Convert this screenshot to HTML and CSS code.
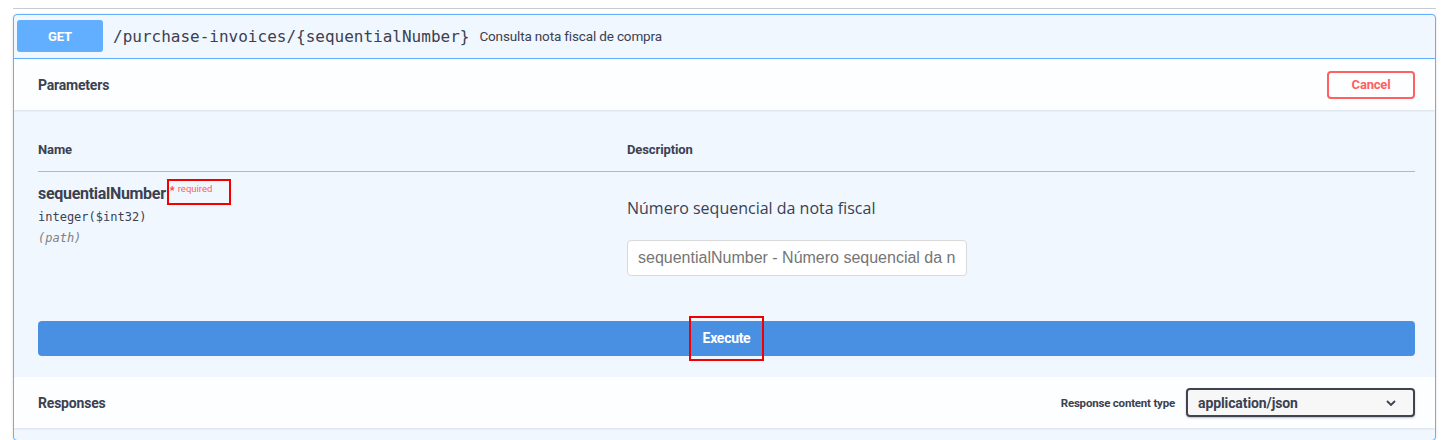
FILE: index.html
```html
<!DOCTYPE html>
<html lang="pt">
<head>
<meta charset="utf-8">
<title>GET /purchase-invoices/{sequentialNumber}</title>
<link rel="stylesheet" href="styles.css">
</head>
<body>
<div class="page">
  <div class="tag-line"></div>
  <div class="opblock">
    <div class="summary">
      <span class="method">GET</span>
      <span class="path">/purchase-invoices/{sequentialNumber}</span>
      <span class="summary-desc">Consulta nota fiscal de compra</span>
    </div>
    <div class="section-header">
      <h4 class="section-title">Parameters</h4>
      <button class="btn-cancel">Cancel</button>
    </div>
    <div class="params">
      <div class="param-head">
        <div class="col-name">Name</div>
        <div class="col-desc">Description</div>
      </div>
      <div class="param-row">
        <div class="col-name">
          <div class="pname">sequentialNumber<span class="req-box"><span class="req-star">*</span><span class="req-text">required</span></span></div>
          <div class="ptype">integer($int32)</div>
          <div class="pin">(path)</div>
        </div>
        <div class="col-desc">
          <p class="pdesc">Número sequencial da nota fiscal</p>
          <input class="pinput" type="text" placeholder="sequentialNumber - Número sequencial da nota fiscal">
        </div>
      </div>
    </div>
    <div class="execute-wrap">
      <button class="btn-execute"><span class="exec-box">Execute</span></button>
    </div>
    <div class="section-header responses">
      <h4 class="section-title">Responses</h4>
      <div class="ctype">
        <span class="ctype-label">Response content type</span>
        <div class="select">
          <span>application/json</span>
          <svg class="chev" width="12" height="8" viewBox="0 0 12 8"><path d="M2 2 L6 6 L10 2" fill="none" stroke="#3b4151" stroke-width="1.8"/></svg>
        </div>
      </div>
    </div>
    <div class="tail"></div>
  </div>
</div>
</body>
</html>
```
FILE: styles.css
```css
* { box-sizing: border-box; }
html, body { margin: 0; padding: 0; background: #fff; }
body { font-family: Roboto, "Open Sans", sans-serif; color: #3b4151; }

.page { padding: 0 13px; }
.tag-line { margin-top: 8px; height: 1px; background: #c9cbcf; }

.opblock {
  margin-top: 5px;
  border: 1px solid #61affe;
  border-radius: 4px;
  background: #f0f7ff;
  overflow: hidden;
  box-shadow: 0 0 3px rgba(0,0,0,.12);
}

.summary {
  display: flex;
  align-items: center;
  padding: 5px 5px 6px 3px;
  border-bottom: 1px solid #61affe;
}
.method {
  width: 86px;
  height: 32px;
  display: flex;
  align-items: center;
  justify-content: center;
  background: #61affe;
  border-radius: 3px;
  color: #fff;
  font-weight: 700;
  font-size: 13px;
  letter-spacing: -0.2px;
}
.path {
  margin-left: 10px;
  font-family: "DejaVu Sans Mono", "Liberation Mono", monospace;
  font-size: 16px;
  color: #3b4151;
}
.summary-desc {
  margin-left: 10px;
  font-size: 13.5px;
  color: #3b4151;
  letter-spacing: -0.15px;
}

.section-header {
  display: flex;
  align-items: center;
  justify-content: space-between;
  height: 51px;
  padding: 0 20px 0 24px;
  background: #fcfeff;
  box-shadow: 0 1px 2px rgba(0,0,0,.1);
}
.section-title {
  margin: 0;
  font-size: 14px;
  font-weight: 700;
  letter-spacing: -0.2px;
  color: #3b4151;
}
.btn-cancel {
  width: 88px;
  height: 28px;
  border: 2px solid #ff6060;
  border-radius: 4px;
  background: transparent;
  color: #ff6060;
  font-family: Roboto, sans-serif;
  font-weight: 700;
  font-size: 13px;
  letter-spacing: -0.2px;
}

.params { padding: 32px 20px 0 24px; }
.param-head {
  display: flex;
  padding-bottom: 13px;
  border-bottom: 1px solid rgba(59,65,81,.35);
  font-size: 13px;
  font-weight: 700;
  line-height: 16px;
  letter-spacing: -0.1px;
}
.col-name { width: 589px; flex: none; }
.col-desc { flex: 1; }

.param-row { display: flex; padding-top: 12px; }
.pname {
  font-size: 16px;
  font-weight: 700;
  line-height: 20px;
  letter-spacing: -0.3px;
  white-space: nowrap;
}
.req-box {
  display: inline-block;
  vertical-align: top;
  width: 64px;
  height: 26px;
  margin-top: -5px;
  margin-left: 1px;
  padding-left: 1px;
  border: 2px solid #f20000;
  font-weight: 400;
  line-height: 16px;
  letter-spacing: 0;
  color: #ff6060;
}
.req-star { font-size: 11px; font-weight: 700; color: #f93e3e; }
.req-text { font-size: 9.5px; margin-left: 3px; position: relative; top: -2px; }
.ptype {
  margin-top: 4px;
  font-family: "DejaVu Sans Mono", "Liberation Mono", monospace;
  font-size: 12px;
  line-height: 16px;
}
.pin {
  margin-top: 5px;
  font-family: "DejaVu Sans Mono", "Liberation Mono", monospace;
  font-size: 12px;
  font-style: italic;
  line-height: 16px;
  color: #808080;
}
.pdesc {
  margin: 13px 0 0;
  font-family: "Open Sans", sans-serif;
  font-size: 16px;
  line-height: 22px;
  color: #3b4151;
}
.pinput {
  display: block;
  margin-top: 21px;
  width: 340px;
  height: 36px;
  padding: 0 10px;
  border: 1px solid #d9d9d9;
  border-radius: 4px;
  background: #fff;
  font-family: "Liberation Sans", Arial, sans-serif;
  font-size: 16px;
  outline: none;
}
.pinput::placeholder { color: #757575; }

.execute-wrap { padding: 45px 20px 21px 24px; }
.btn-execute {
  display: flex;
  align-items: center;
  justify-content: center;
  width: 100%;
  height: 35px;
  padding: 0;
  border: none;
  border-radius: 4px;
  background: #4990e2;
  color: #fff;
  font-family: Roboto, sans-serif;
  font-weight: 700;
  font-size: 14px;
  letter-spacing: -0.3px;
  overflow: visible;
}
.exec-box {
  display: inline-block;
  width: 75px;
  height: 45px;
  line-height: 41px;
  border: 2px solid #f20000;
  text-align: center;
}

.responses { height: 51px; }
.ctype { display: flex; align-items: center; }
.ctype-label {
  font-size: 11.5px;
  font-weight: 700;
  letter-spacing: -0.2px;
  margin-right: 11px;
}
.select {
  display: flex;
  align-items: center;
  justify-content: space-between;
  width: 229px;
  height: 29px;
  padding: 0 16px 0 10px;
  border: 2px solid #41444e;
  border-radius: 4px;
  background: #f7f7f7;
  box-shadow: 0 1px 2px rgba(0,0,0,.25);
  font-size: 14px;
  font-weight: 700;
  letter-spacing: -0.1px;
}
.chev { display: block; }
.tail { height: 12px; }
```
